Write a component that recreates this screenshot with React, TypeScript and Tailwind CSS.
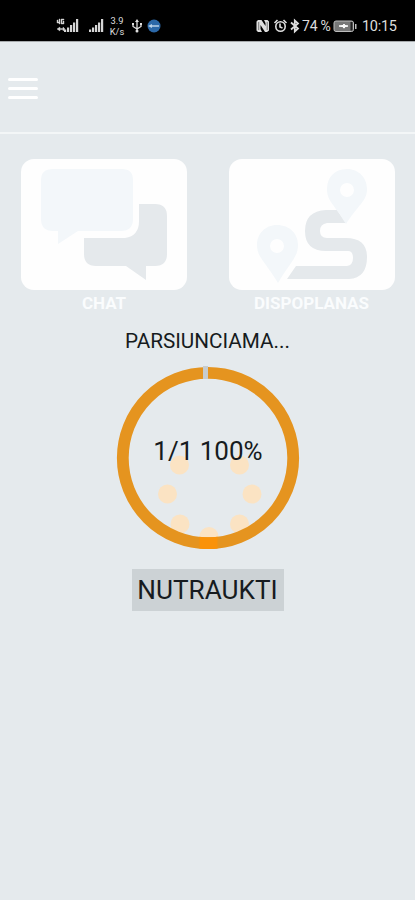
import React from 'react';

function Signal({ lte = false }: { lte?: boolean }) {
  return (
    <svg className={lte ? 'h-4 w-[23px]' : 'h-4 w-4'} viewBox={lte ? '-7 0 23 16' : '0 0 16 16'} fill="#d6d6d6">
      <path d="M1 11.500h2.200V14H1zM4 9.500h2.200V14H4zM7 7h2.200v7H7zM10 4.500h2.200V14H10zM13 1h2.200v13H13z" />
      {lte && <path d="M-6 2h1v2h1V1h1v5h-1V5h-2zM-2 1h3v1h-2v3h1V3h1v3h-3zM-6 11l3-2v1.500H0V9l2 2-2 2v-1.500h-3V13z" stroke="#d6d6d6" strokeWidth=".4" />}
    </svg>
  );
}

function StatusBar() {
  return (
    <header className="flex h-[41px] items-start bg-black pt-[18px] text-[#dedede]">
      <div className="ml-[56px] flex w-[199px]">
        <Signal lte />
        <div className="w-[9px]" />
        <Signal />
        <div className="-mt-[3px] ml-[5px] w-[16px] text-center text-[9.300px] leading-[11px]">
          <div>3.9</div>
          <div>K/s</div>
        </div>
        <svg className="ml-[6px] h-4 w-[12px]" viewBox="0 0 12 16" fill="none" stroke="#dedede" strokeWidth="1.300">
          <path d="M6 3v11M2 6v2.500l4 2.500 4-2.500V5.500" />
          <path d="M6 1l2 3H4zM1 5h2v2H1zM9 5h2v2H9z" fill="#dedede" stroke="none" />
          <circle cx="6" cy="13" r="1.500" fill="#dedede" stroke="none" />
        </svg>
        <svg className="ml-[4px] h-4 w-[14px]" viewBox="0 0 14 16">
          <circle cx="7" cy="8" r="6.500" fill="#2b68a8" />
          <path d="M1 8l4-2v1.300h7v1.500H5V10z" fill="#b9d1e8" />
        </svg>
      </div>
      <svg className="h-4 w-[45px]" viewBox="0 0 45 16" fill="none" stroke="#dedede">
        <path d="M3 2h3.500l4 6V5L9 2h3.500L14 3.500v9L12 14h-2L5.500 7v4L7 14H3l-1.500-1.500v-9z" fill="#dedede" stroke="none" />
        <path d="M3.700 4v8M12.200 4v8" stroke="#333" strokeWidth=".6" />
        <circle cx="25.500" cy="8.500" r="4.700" strokeWidth="1.600" />
        <path d="M25 5.500v3.500l2.500 1M19.500 5l3-3M31.500 5l-3-3" strokeWidth="1.600" />
        <path d="M36 4.500l7 6-3.200 3V2.500l3.200 3-7 6" strokeWidth="1.800" />
      </svg>
      <div className="ml-[2px] w-[31px] whitespace-nowrap text-[14px] leading-[17px] tracking-[-0.200px]">74 %</div>
      <svg className="h-4 w-[24px]" viewBox="0 0 24 16">
        <rect x="1" y="3" width="19.500" height="10.500" rx="2" fill="#777" stroke="#bdbdbd" />
        <path d="M17.500 4h2v8.500h-2z" fill="#222" />
        <path d="M22 6h1.500v5H22z" fill="#bdbdbd" />
        <path d="M6 8l4-.5 1-1.500 1 1.500 3 .5-3 .700-1 1.500-1-1.500z" fill="white" stroke="white" />
      </svg>
      <div className="ml-[5px] text-[14.500px] leading-[17px] tracking-[-0.300px]">10:15</div>
    </header>
  );
}

function ChatIcon() {
  return (
    <svg className="h-[131px] w-[166px]" viewBox="0 0 166 131">
      <path d="M32 10h69q11 0 11 11v39q0 12-12 12H57L37 85V72h-5Q20 72 20 60V21q0-11 12-11z" fill="#f3f7fa" />
      <path d="M118 45h16q12 0 12 12v38q0 12-12 12h-9v14l-20-14H75q-12 0-12-12V79h41q14-2 14-17z" fill="#e5e9ec" />
    </svg>
  );
}

function RouteIcon() {
  return (
    <svg className="h-[131px] w-[166px]" viewBox="0 0 166 131">
      <path d="M108 51H97q-21 1-21 21t21 20h22q5 0 5 7t-6 8H67l-9 13h62q18-1 18-22 0-19-21-19H98q-7 0-7-7t7-8h19z" fill="#e5e9ec" />
      <g fill="#f3f7fa" fillRule="evenodd">
        <path d="M118 10c-13 0-20 9-20 20 0 12 7 15 19 35 13-20 21-23 21-35 0-11-8-20-20-20zm0 14a7 7 0 1 1 0 14 7 7 0 0 1 0-14z" />
        <path d="M48 66c-12 0-20 9-20 20 0 12 7 15 21 38 13-22 20-26 20-38 0-11-8-20-21-20zm0 14a7 7 0 1 1 0 14 7 7 0 0 1 0-14z" />
      </g>
    </svg>
  );
}

function Tile({ label, children }: { label: string; children: React.ReactNode }) {
  return (
    <div className="w-[166px]">
      <div className="h-[131px] overflow-hidden rounded-[13px] bg-[#fefefe]">{children}</div>
      <div className="mt-[3px] text-center text-[17px] font-bold leading-5 text-[#fafcfd]">{label}</div>
    </div>
  );
}

const dots = [
  [179.5, 465], [239.5, 465], [167.5, 494], [252, 494], [180, 524], [239.5, 524], [209, 536.500],
];

export default function App() {
  return (
    <main className="h-[900px] w-[415px] overflow-hidden bg-[#e5eaed] font-[Roboto,sans-serif] text-[#161b20]">
      <StatusBar />
      <nav className="h-[93px] border-b-2 border-t border-b-[#f3f6f7] border-t-[#a6aaac] pl-[8px] pt-[36px]">
        <div className="flex w-[30px] flex-col gap-[6px]">
          <div className="h-[3px] rounded-full bg-white" />
          <div className="h-[3px] rounded-full bg-white" />
          <div className="h-[3px] rounded-full bg-white" />
        </div>
      </nav>
      <section className="flex justify-between pl-[21px] pr-[20.500px] pt-[25px]">
        <Tile label="CHAT"><ChatIcon /></Tile>
        <Tile label="DISPOPLANAS"><RouteIcon /></Tile>
      </section>
      <section className="flex flex-col items-center">
        <div className="mt-[16px] text-[20.700px] leading-6">PARSIUNCIAMA...</div>
        <div className="mt-[13px] grid h-[184px] w-[184px] place-items-center">
          <svg className="col-start-1 row-start-1 h-[184px] w-[184px]" viewBox="116 366 184 184">
            {dots.map(([x, y]) => <circle key={`${x}-${y}`} cx={x} cy={y} r="9.500" fill="#fbe3c3" />)}
            <circle cx="208" cy="458" r="85.200" fill="none" stroke="#e5941f" strokeWidth="11.800" />
            <path d="M203 366h5v13h-5z" fill="#c7ccce" />
            <path d="M199.500 536.700q9 1 18 0V548.500q-9 1-18 0z" fill="#fa9208" />
          </svg>
          <div className="col-start-1 row-start-1 -mt-[14px] ml-[1px] text-[26px] leading-8">1/1 100%</div>
        </div>
        <button className="mt-[19px] h-[42px] w-[152px] bg-[#ccd2d5] text-[26.200px] leading-[42px]">NUTRAUKTI</button>
      </section>
    </main>
  );
}
